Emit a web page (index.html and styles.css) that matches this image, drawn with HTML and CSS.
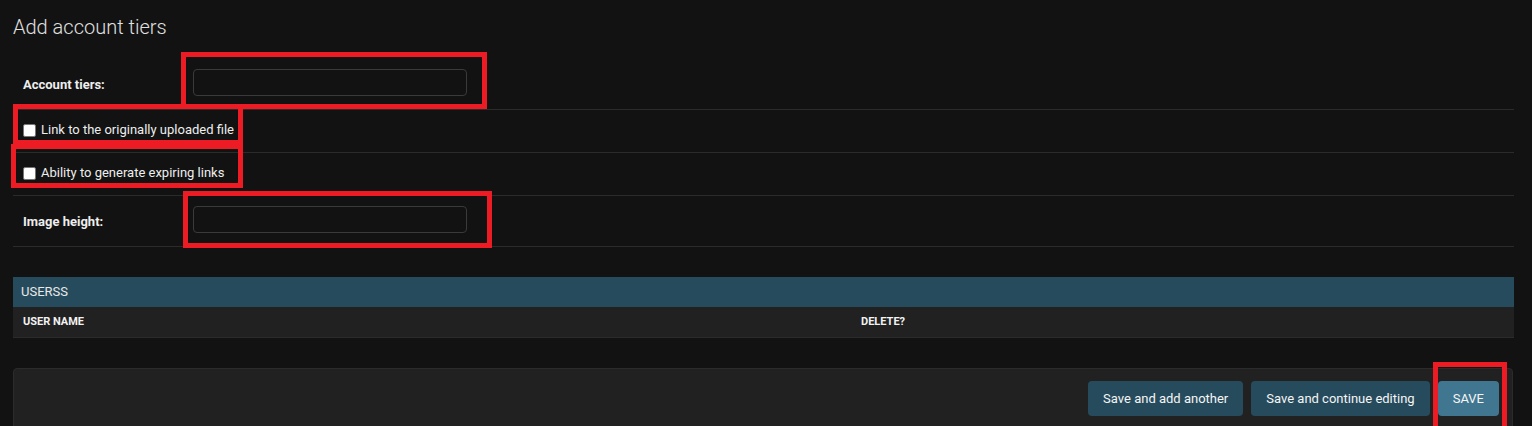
FILE: index.html
```html
<!DOCTYPE html>
<html lang="en">
<head>
<meta charset="utf-8">
<title>Add account tiers</title>
<link rel="stylesheet" href="styles.css">
</head>
<body>
<div class="page">
  <h1 class="title">Add account tiers</h1>
  <form class="form">
    <fieldset class="module">
      <div class="form-row">
        <label class="field-label" for="tiers">Account tiers:</label>
        <input class="text-input" id="tiers" type="text">
      </div>
      <div class="form-row check-row">
        <input class="checkbox" id="orig" type="checkbox">
        <label class="check-label" for="orig">Link to the originally uploaded file</label>
      </div>
      <div class="form-row check-row">
        <input class="checkbox" id="exp" type="checkbox">
        <label class="check-label" for="exp">Ability to generate expiring links</label>
      </div>
      <div class="form-row">
        <label class="field-label" for="height">Image height:</label>
        <input class="text-input" id="height" type="text">
      </div>
    </fieldset>

    <div class="inline-group">
      <h2 class="inline-title">Userss</h2>
      <div class="thead">
        <span class="th">User name</span>
        <span class="th">Delete?</span>
      </div>
    </div>

    <div class="submit-row">
      <button type="button" class="btn">Save and add another</button>
      <button type="button" class="btn">Save and continue editing</button>
      <button type="button" class="btn btn-default">SAVE</button>
    </div>
  </form>

  <div class="mark mark-1"></div>
  <div class="mark mark-2"></div>
  <div class="mark mark-3"></div>
  <div class="mark mark-4"></div>
  <div class="mark mark-5"></div>
</div>
</body>
</html>
```
FILE: styles.css
```css
* { box-sizing: border-box; }

html, body {
  margin: 0;
  padding: 0;
  background: #121212;
  overflow: hidden;
}

body {
  font-family: Roboto, "Liberation Sans", sans-serif;
  color: #eeeeee;
  font-size: 13px;
}

.page {
  position: relative;
  padding: 15px 18px 0 13px;
  height: 426px;
}

.title {
  margin: 0;
  font-size: 20px;
  line-height: 24px;
  font-weight: 300;
  color: #e0e0e0;
}

.form {
  margin-top: 20px;
}

.module {
  margin: 0;
  padding: 0;
  border: 0;
}

.form-row {
  display: flex;
  align-items: flex-start;
  padding: 10px 10px 13px;
  border-bottom: 1px solid #2b2b2b;
}

.field-label {
  width: 170px;
  flex: none;
  font-weight: 700;
  font-size: 13px;
  line-height: 15px;
  padding-top: 8px;
  color: #eeeeee;
}

.text-input {
  width: 274px;
  height: 27px;
  background: #121212;
  border: 1px solid #3a3a3a;
  border-radius: 4px;
  color: #eee;
  font: inherit;
  padding: 2px 6px;
  margin: 0;
}

.check-row {
  padding: 12px 10px 15px;
  align-items: flex-start;
}

.checkbox {
  appearance: none;
  -webkit-appearance: none;
  width: 13px;
  height: 13px;
  margin: 2px 5px 0 0;
  background: #ffffff;
  border: 1px solid #767676;
  border-radius: 2px;
  flex: none;
}

.check-label {
  font-size: 13px;
  line-height: 15px;
  color: #eeeeee;
}

.inline-group {
  margin-top: 30px;
}

.inline-title {
  margin: 0;
  background: #264b5d;
  color: #e8e8e8;
  font-size: 13px;
  font-weight: 400;
  line-height: 16px;
  padding: 7px 8px;
  text-transform: uppercase;
}

.thead {
  display: grid;
  grid-template-columns: 838px 1fr;
  background: #212121;
  border-bottom: 1px solid #2b2b2b;
}

.th {
  padding: 8px 10px;
  font-size: 11px;
  line-height: 14px;
  font-weight: 700;
  text-transform: uppercase;
  color: #f2f2f2;
}

.submit-row {
  margin-top: 30px;
  margin-right: 1px;
  display: flex;
  justify-content: flex-end;
  gap: 8px;
  padding: 12px 13px 20px;
  background: #212121;
  border: 1px solid #2b2b2b;
  border-radius: 4px;
}

.btn {
  font: inherit;
  font-size: 13px;
  line-height: 15px;
  padding: 10px 15px;
  border: 0;
  border-radius: 4px;
  background: #264b5d;
  color: #f5f5f5;
  cursor: pointer;
}

.btn-default {
  background: #417690;
}

.mark {
  position: absolute;
  border: 5px solid #ed1c24;
  pointer-events: none;
}

.mark-1 { left: 181px; top: 52px; width: 306px; height: 57px; }
.mark-2 { left: 13px; top: 104px; width: 230px; height: 41px; }
.mark-3 { left: 11px; top: 144px; width: 232px; height: 44px; }
.mark-4 { left: 183px; top: 191px; width: 309px; height: 57px; }
.mark-5 { left: 1433px; top: 362px; width: 74px; height: 80px; }
```
